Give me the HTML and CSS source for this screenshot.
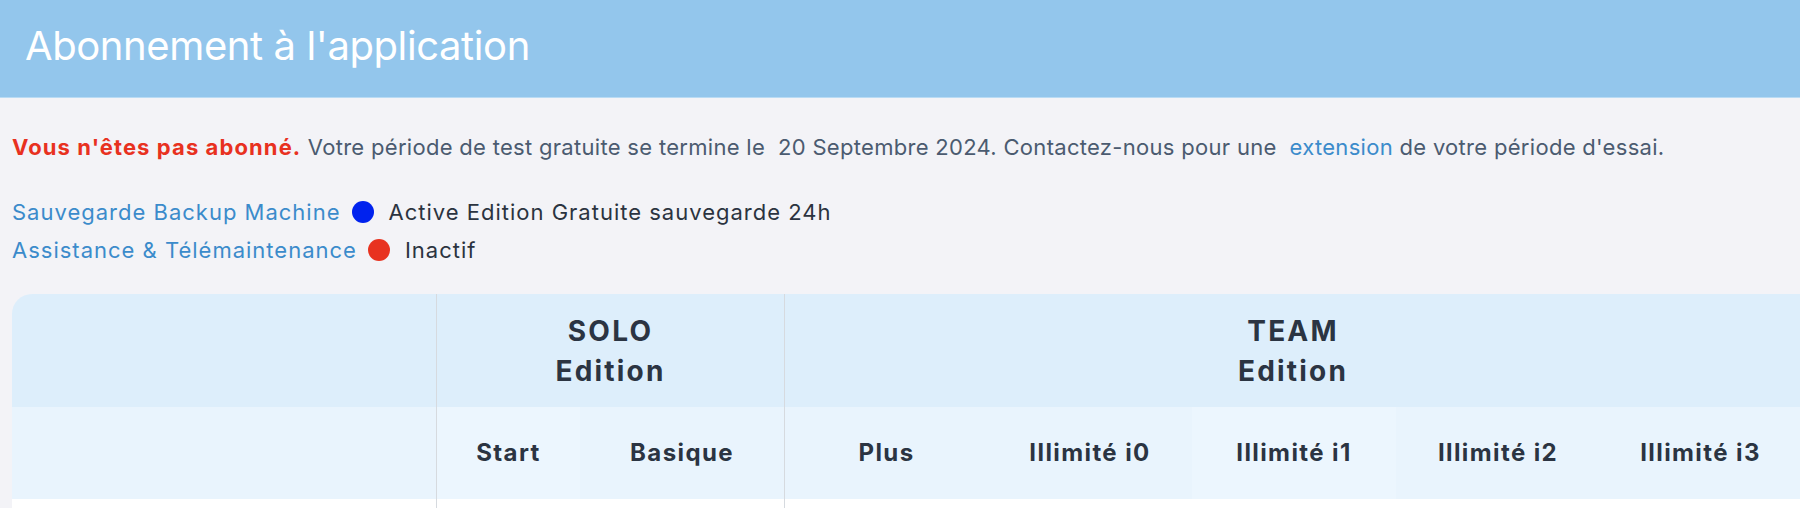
FILE: index.html
```html
<!DOCTYPE html>
<html lang="fr">
<head>
<meta charset="utf-8">
<title>Abonnement à l'application</title>
<link rel="stylesheet" href="styles.css">
</head>
<body>
<header class="topbar">
  <h1 class="topbar-title">Abonnement à l'application</h1>
</header>
<main class="content">
  <p class="notice"><strong class="notice-warn">Vous n'êtes pas abonné.</strong> Votre période de test gratuite se termine le&nbsp; 20 Septembre 2024. Contactez-nous pour une&nbsp; <a class="link" href="#">extension</a> de votre période d'essai.</p>
  <ul class="services">
    <li class="service"><a class="link" href="#">Sauvegarde Backup Machine</a><span class="dot dot-blue"></span><span class="service-status">Active Edition Gratuite sauvegarde 24h</span></li>
    <li class="service"><a class="link" href="#">Assistance &amp; Télémaintenance</a><span class="dot dot-red"></span><span class="service-status">Inactif</span></li>
  </ul>
  <table class="plans">
    <colgroup>
      <col class="col-label">
      <col class="col-start">
      <col class="col-std">
      <col class="col-std">
      <col class="col-std">
      <col class="col-std">
      <col class="col-std">
      <col class="col-last">
    </colgroup>
    <thead>
      <tr class="row-edition">
        <th class="cell-corner"></th>
        <th class="cell-group" colspan="2">SOLO<br>Edition</th>
        <th class="cell-group" colspan="5">TEAM<br>Edition</th>
      </tr>
      <tr class="row-plan">
        <th></th>
        <th class="cell-sep cell-hl">Start</th>
        <th>Basique</th>
        <th class="cell-sep">Plus</th>
        <th>Illimité i0</th>
        <th class="cell-hl">Illimité i1</th>
        <th>Illimité i2</th>
        <th>Illimité i3</th>
      </tr>
    </thead>
    <tbody>
      <tr class="row-body">
        <td></td>
        <td class="cell-sep"></td>
        <td></td>
        <td class="cell-sep"></td>
        <td></td>
        <td></td>
        <td></td>
        <td></td>
      </tr>
    </tbody>
  </table>
</main>
</body>
</html>
```
FILE: styles.css
```css
* { box-sizing: border-box; }

html, body {
  margin: 0;
  padding: 0;
}

body {
  background: #f3f3f7;
  font-family: Inter, "Noto Sans", "Liberation Sans", sans-serif;
  color: #2b3340;
  overflow: hidden;
  width: 1800px;
}

.topbar {
  height: 98px;
  background: #93c6ec;
  border-bottom: 1px solid #b9dbf4;
  display: flex;
  align-items: center;
  padding: 0 0 6px 25px;
}

.topbar-title {
  margin: 0;
  font-size: 40px;
  font-weight: 400;
  color: #ffffff;
  letter-spacing: -0.4px;
  line-height: 1.2;
}

.content {
  padding: 33px 0 0 12px;
}

.notice {
  margin: 0;
  font-size: 22px;
  line-height: 32px;
  color: #4b5b70;
  letter-spacing: 0.3px;
}

.notice-warn {
  color: #e8311f;
  font-weight: 700;
  letter-spacing: 1.1px;
}

.link {
  color: #3b8bcb;
  text-decoration: none;
}

.services {
  list-style: none;
  margin: 30px 0 0 0;
  padding: 0;
  font-size: 22px;
  line-height: 38px;
  letter-spacing: 1px;
}

.service {
  display: flex;
  align-items: center;
}

.dot {
  width: 22px;
  height: 22px;
  border-radius: 50%;
  margin: 0 15px 0 11px;
  flex: none;
}

.dot-blue { background: #0022ee; }
.dot-red { background: #e8321f; }

.service-status {
  color: #2b3340;
}

.plans {
  margin-top: 25px;
  width: 1788px;
  table-layout: fixed;
  border-collapse: separate;
  border-spacing: 0;
  color: #2b3442;
}

.col-label { width: 424px; }
.col-start { width: 144px; }
.col-std { width: 204px; }
.col-last { width: 201px; }

.plans th {
  font-weight: 700;
  text-align: center;
  vertical-align: middle;
  padding: 0;
}

.row-edition th {
  height: 113px;
  background: #ddeefb;
  font-size: 28px;
  line-height: 40px;
  letter-spacing: 2.2px;
}

.row-edition .cell-group {
  border-left: 1px solid #d6dadf;
}

.cell-corner {
  border-top-left-radius: 20px;
}

.row-plan th {
  height: 92px;
  background: #e9f4fd;
  font-size: 24px;
  line-height: 32px;
  letter-spacing: 1.4px;
}

.row-plan .cell-hl {
  background: #ecf6fe;
}

.cell-sep {
  border-left: 1px solid #d6dadf;
}

.row-body td {
  height: 60px;
  background: #ffffff;
}
```
